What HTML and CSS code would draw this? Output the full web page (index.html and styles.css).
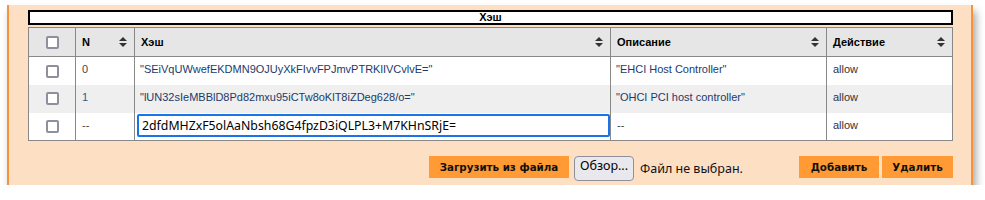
FILE: index.html
```html
<!DOCTYPE html>
<html lang="ru">

<head>
  <meta charset="UTF-8" />
  <title>Хэш</title>
  <link rel="stylesheet" href="styles.css">
</head>

<body>
  <div class="panel">
    <!-- заголовок таблицы -->
    <div class="caption">Хэш</div>

    <table class="grid">
      <thead>
        <tr>
          <th class="chk"><span class="box"></span></th>
          <th class="col-n"><div class="th-in">N <svg class="sort" viewBox="0 0 8 10"><path d="M4 0 L8 4 L0 4 Z M0 6 L8 6 L4 10 Z"/></svg></div></th>
          <th class="col-hash"><div class="th-in">Хэш <svg class="sort" viewBox="0 0 8 10"><path d="M4 0 L8 4 L0 4 Z M0 6 L8 6 L4 10 Z"/></svg></div></th>
          <th class="col-desc"><div class="th-in">Описание <svg class="sort" viewBox="0 0 8 10"><path d="M4 0 L8 4 L0 4 Z M0 6 L8 6 L4 10 Z"/></svg></div></th>
          <th class="col-act"><div class="th-in">Действие <svg class="sort" viewBox="0 0 8 10"><path d="M4 0 L8 4 L0 4 Z M0 6 L8 6 L4 10 Z"/></svg></div></th>
        </tr>
      </thead>
      <tbody>
        <tr>
          <td class="chk"><span class="box"></span></td>
          <td class="num">0</td>
          <td class="val">"SEiVqUWwefEKDMN9OJUyXkFIvvFPJmvPTRKlIVCvlvE="</td>
          <td class="val">"EHCI Host Controller"</td>
          <td>allow</td>
        </tr>
        <tr class="odd">
          <td class="chk"><span class="box"></span></td>
          <td class="num blue">1</td>
          <td class="val">"lUN32sIeMBBlD8Pd82mxu95iCTw8oKlT8iZDeg628/o="</td>
          <td class="val">"OHCI PCI host controller"</td>
          <td>allow</td>
        </tr>
        <tr>
          <td class="chk"><span class="box"></span></td>
          <td class="num">--</td>
          <td class="edit"><input type="text" value="2dfdMHZxF5olAaNbsh68G4fpzD3iQLPL3+M7KHnSRjE=" /></td>
          <td class="num">--</td>
          <td>allow</td>
        </tr>
      </tbody>
    </table>

    <!-- кнопки -->
    <div class="bar">
      <button class="orange load">Загрузить из файла</button>
      <span class="file-btn">Обзор...</span>
      <span class="file-name">Файл не выбран.</span>
      <div class="actions">
        <button class="orange add">Добавить</button>
        <button class="orange del">Удалить</button>
      </div>
    </div>
  </div>
</body>

</html>
```

FILE: styles.css
```css
* {
  margin: 0;
  padding: 0;
  box-sizing: border-box;
}

body {
  background: #fff;
  padding: 5px 0 0 7px;
  font-family: "Liberation Sans", Arial, sans-serif;
}

.panel {
  width: 966px;
  height: 180px;
  background: #fddfc4;
  border-left: 2px solid #f7943a;
  border-right: 2px solid #f7943a;
  padding: 5px 18px 0 19px;
  box-shadow: 3px 6px 8px rgba(0, 0, 0, 0.35);
}

.caption {
  height: 15px;
  border: 2px solid #000;
  background: #fff;
  text-align: center;
  font: bold 11px/11px "Liberation Sans", Arial, sans-serif;
  color: #000;
}

.grid {
  width: 925px;
  margin-top: 2px;
  border-collapse: collapse;
  border: 1px solid #888;
  background: #fff;
  font-size: 11px;
  color: #333;
}

.grid th,
.grid td {
  border: 1px solid #888;
  border-top: none;
  border-bottom: none;
  text-align: left;
}

.grid th {
  height: 29px;
  background: #e6e6e6;
  font-weight: bold;
  color: #000;
  padding: 0 7px 0 6px;
  border-bottom: 1px solid #888;
}

.grid td {
  height: 28px;
  padding: 6px 5px 0 6px;
  vertical-align: top;
}

.grid tr.odd td {
  background: #efefef;
}

.th-in {
  display: flex;
  align-items: center;
  justify-content: space-between;
}

.sort {
  width: 8px;
  height: 10px;
  fill: #333;
}

.col-n {
  width: 59px;
}

.col-hash {
  width: 475px;
}

.col-desc {
  width: 216px;
}

.grid .chk {
  width: 47px;
  padding: 0;
  vertical-align: middle;
  text-align: center;
}

.box {
  display: inline-block;
  width: 13px;
  height: 13px;
  border: 2px solid #8f8f9d;
  border-radius: 2px;
  background: #fff;
  vertical-align: middle;
}

.grid td.num {
  color: #444;
}

.grid td.val {
  color: #1c3a6b;
  padding-left: 5px;
}

.grid td.blue {
  color: #2a5d8f;
}

.grid td.edit {
  padding: 1px 0 0 2px;
}

.edit input {
  width: 473px;
  height: 23px;
  border: 2px solid #1a73e8;
  border-radius: 2px;
  outline: none;
  padding: 0 4px 0 3px;
  font: 12.3px "Noto Sans", "DejaVu Sans", sans-serif;
  color: #000;
  background: #fff;
}

.bar {
  display: flex;
  align-items: flex-start;
  margin-top: 15px;
  padding-left: 401px;
}

.orange {
  height: 22px;
  border: none;
  background: #ff9a35;
  color: #111;
  font: bold 10.3px "DejaVu Sans", sans-serif;
  padding: 0;
  text-align: center;
}

.load {
  width: 140px;
}

.file-btn {
  margin-left: 5px;
  width: 60px;
  height: 25px;
  line-height: 23px;
  text-align: center;
  border: 1px solid #8f8f9d;
  border-radius: 4px;
  background: #e9e9ed;
  font: 12.5px "Noto Sans", "DejaVu Sans", sans-serif;
  color: #000;
}

.file-name {
  margin-left: 6px;
  line-height: 25px;
  font: 12.5px/25px "Noto Sans", "DejaVu Sans", sans-serif;
  color: #111;
}

.actions {
  display: flex;
  gap: 3px;
  margin-left: auto;
}

.add {
  width: 80px;
}

.del {
  width: 71px;
}
```
